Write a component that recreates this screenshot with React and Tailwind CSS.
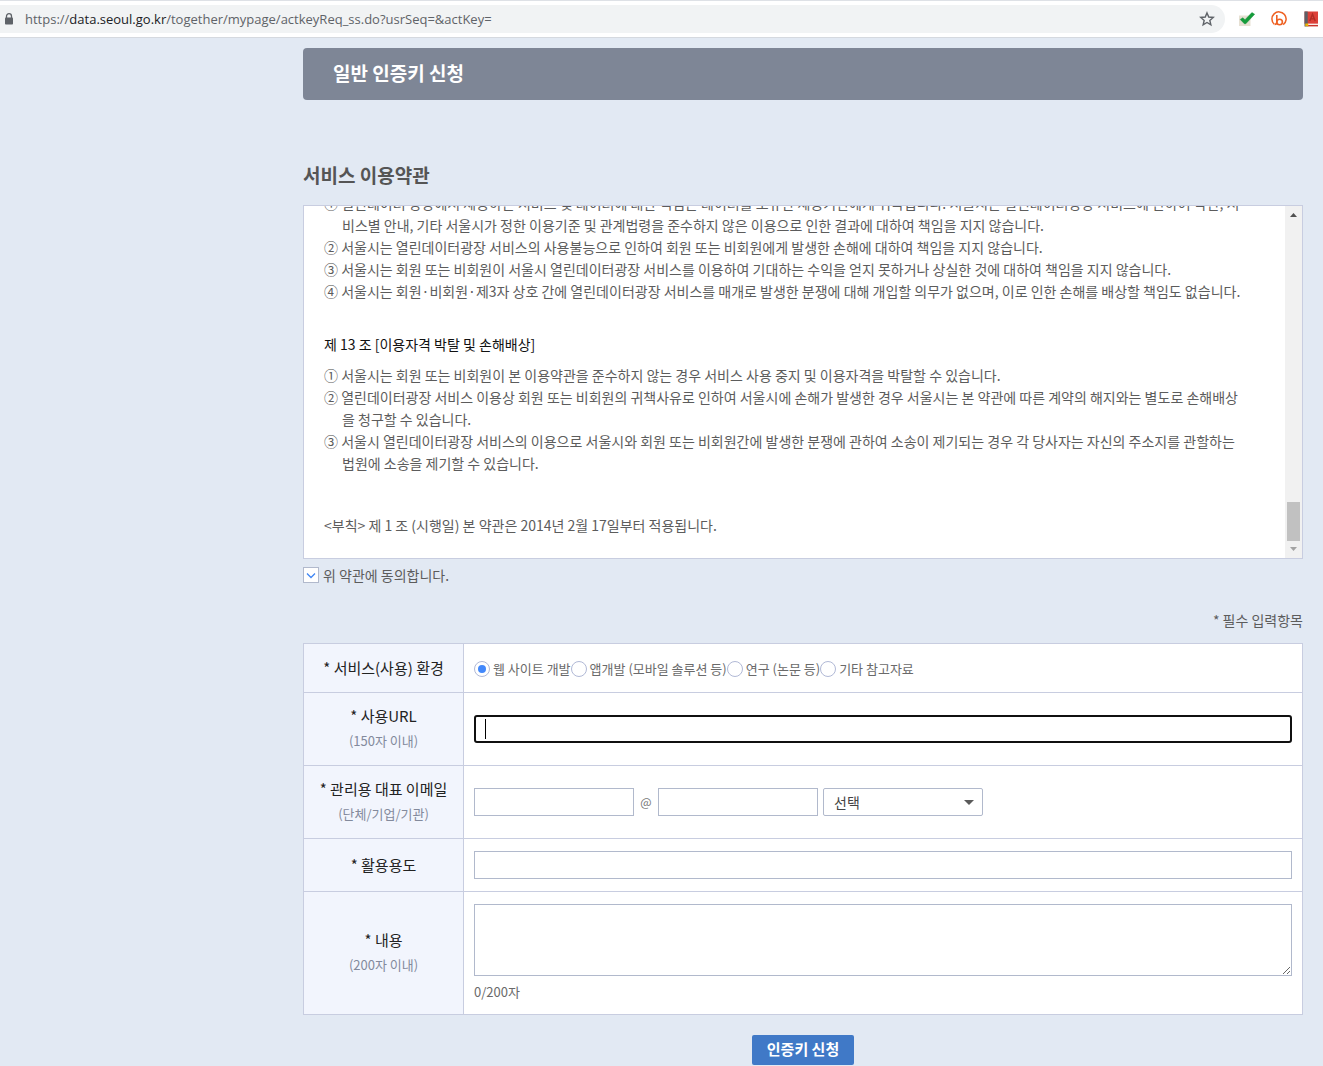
import React from "react";

const TERMS = [
  {
    title: null,
    items: [
      [
        "① 열린데이터 광장에서 제공하는 서비스 및 데이터에 대한 책임은 데이터를 보유한 제공기관에게 귀속됩니다. 서울시는 열린데이터광장 서비스에 관하여 약관, 서",
        "비스별 안내, 기타 서울시가 정한 이용기준 및 관계법령을 준수하지 않은 이용으로 인한 결과에 대하여 책임을 지지 않습니다.",
      ],
      ["② 서울시는 열린데이터광장 서비스의 사용불능으로 인하여 회원 또는 비회원에게 발생한 손해에 대하여 책임을 지지 않습니다."],
      ["③ 서울시는 회원 또는 비회원이 서울시 열린데이터광장 서비스를 이용하여 기대하는 수익을 얻지 못하거나 상실한 것에 대하여 책임을 지지 않습니다."],
      ["④ 서울시는 회원·비회원·제3자 상호 간에 열린데이터광장 서비스를 매개로 발생한 분쟁에 대해 개입할 의무가 없으며, 이로 인한 손해를 배상할 책임도 없습니다."],
    ],
  },
  {
    title: "제 13 조 [이용자격 박탈 및 손해배상]",
    items: [
      ["① 서울시는 회원 또는 비회원이 본 이용약관을 준수하지 않는 경우 서비스 사용 중지 및 이용자격을 박탈할 수 있습니다."],
      [
        "② 열린데이터광장 서비스 이용상 회원 또는 비회원의 귀책사유로 인하여 서울시에 손해가 발생한 경우 서울시는 본 약관에 따른 계약의 해지와는 별도로 손해배상",
        "을 청구할 수 있습니다.",
      ],
      [
        "③ 서울시 열린데이터광장 서비스의 이용으로 서울시와 회원 또는 비회원간에 발생한 분쟁에 관하여 소송이 제기되는 경우 각 당사자는 자신의 주소지를 관할하는",
        "법원에 소송을 제기할 수 있습니다.",
      ],
    ],
  },
];

const ENVIRONMENTS = ["웹 사이트 개발", "앱개발 (모바일 솔루션 등)", "연구 (논문 등)", "기타 참고자료"];

function BrowserBar() {
  return (
    <header className="flex h-[38px] items-center border-t border-b border-t-[#dee1e6] border-b-[#d5d9df] bg-white pr-1">
      <div className="flex h-7 flex-1 items-center rounded-r-full bg-[#f1f3f4] pr-2.5 pl-1">
        <svg className="mr-[11px] h-3 w-2.5" viewBox="0 0 10 12" aria-hidden="true">
          <path d="M2.5 5V3.2a2.5 2.5 0 0 1 5 0V5" fill="none" stroke="#5f6368" strokeWidth="1.3" />
          <rect x="1" y="4.6" width="8" height="6.9" rx="0.8" fill="#5f6368" />
        </svg>
        <span className="flex-1 font-['Open_Sans',sans-serif] text-[13px] leading-5 text-[#5f6368]">
          https://<span className="text-[#202124]">data.seoul.go.kr</span>/together/mypage/actkeyReq_ss.do?usrSeq=&amp;actKey=
        </span>
        <button type="button" aria-label="북마크" className="flex">
          <svg className="h-4 w-4" viewBox="0 0 16 16" aria-hidden="true">
            <path d="M8 1.9l1.75 4.15 4.5.38-3.42 2.95 1.03 4.4L8 11.45l-3.86 2.33 1.03-4.4-3.42-2.95 4.5-.38z" fill="none" stroke="#5f6368" strokeWidth="1.4" />
          </svg>
        </button>
      </div>
      <div className="flex items-center gap-4 pl-3.5">
        <svg className="h-4 w-4" viewBox="0 0 16 16" aria-hidden="true">
          <path d="M0 4.5h11.5V15H0z" fill="#e6e0d3" />
          <path d="M1.2 8.4l2.6-1.7 2.2 2L12.9 1.5l2.8 1.7-8.9 9.6H5.4z" fill="#149c3b" stroke="#0d8a31" strokeWidth="0.4" />
        </svg>
        <svg className="h-4 w-4" viewBox="0 0 16 16" aria-hidden="true">
          <path d="M3.2 13.2A7.1 7.1 0 1 1 12.2 13.7" fill="none" stroke="#ee6123" strokeWidth="1.5" />
          <path d="M3.6 13.4c1.6 0 2.2-.9 2.2-2.4V3.9" fill="none" stroke="#ee6123" strokeWidth="1.6" />
          <circle cx="8.6" cy="11" r="2.8" fill="none" stroke="#ee6123" strokeWidth="1.6" />
        </svg>
        <svg className="h-4 w-4" viewBox="0 0 16 16" aria-hidden="true">
          <rect x="1.5" y="0.5" width="13.5" height="12.3" fill="#dc4038" />
          <path d="M4.5 12.8H15v1.2H4.5z" fill="#f6ebe8" />
          <path d="M4.5 14H15v1.4H4.5z" fill="#c9352c" />
          <rect x="1.5" y="0.5" width="3.2" height="15" fill="#5b6067" />
          <path d="M6.8 10L9.5 3.2 12.2 10M7.7 7.9h3.6" fill="none" stroke="#b02c24" strokeWidth="1.4" />
          <path d="M2.3 12.4h3v3.4l-1.5-1-1.5 1z" fill="#f4b400" />
        </svg>
      </div>
    </header>
  );
}

function TermsPanel() {
  return (
    <div className="flex h-[354px] border border-[#c8cde0] bg-white">
      <div className="flex min-w-0 flex-1 flex-col justify-end overflow-hidden pr-5 pb-[22px] pl-5 text-[14px] leading-[22px] whitespace-nowrap text-[#5c5c5c]">
        {TERMS.map((section, i) => (
          <section key={i} className={i === 0 ? "mb-[31px]" : "mb-10"}>
            {section.title && <h3 className="mb-[9px] font-normal text-[#111]">{section.title}</h3>}
            {section.items.map((lines) => (
              <p key={lines[0]} className="pl-[18px] -indent-[18px]">
                {lines[0]}
                {lines[1] && <span className="block indent-0">{lines[1]}</span>}
              </p>
            ))}
          </section>
        ))}
        <p>&lt;부칙&gt; 제 1 조 (시행일) 본 약관은 2014년 2월 17일부터 적용됩니다.</p>
      </div>
      <div className="flex w-[17px] flex-col items-center justify-between bg-[#f1f1f1]" aria-hidden="true">
        <svg className="h-[17px] w-[17px]" viewBox="0 0 17 17">
          <path d="M5 11l3.5-4 3.5 4z" fill="#505050" />
        </svg>
        <div className="flex flex-col items-center">
          <div className="h-[39px] w-[13px] bg-[#c1c1c1]" />
          <svg className="h-[17px] w-[17px]" viewBox="0 0 17 17">
            <path d="M5 6l3.5 4L12 6z" fill="#a3a3a3" />
          </svg>
        </div>
      </div>
    </div>
  );
}

function Row({ id, label, note, height, last, children }) {
  return (
    <tr className={height}>
      <th scope="row" className="w-[160px] border border-[#c8cde0] bg-[#f2f5fd] p-0 pb-0.5 text-center align-middle font-normal">
        <label htmlFor={id} className="block text-[15px] leading-[25px] text-[#222]">
          {label}
        </label>
        {note && <span className="block text-[13px] leading-[25px] text-[#838a9c]">{note}</span>}
      </th>
      <td className={last ? "border border-[#c8cde0] bg-white px-2.5 pt-3 pb-2.5 align-top" : "border border-[#c8cde0] bg-white px-2.5 align-middle"}>
        {children}
      </td>
    </tr>
  );
}

const fieldClass = "block h-7 border border-[#b1b9cc] bg-white px-2.5 text-[13px] text-[#444] outline-none";

export default function App() {
  return (
    <div className="min-h-screen bg-[#e2e9f3] font-['Noto_Sans_CJK_KR',sans-serif] text-[#5c5c5c]">
      <BrowserBar />
      <main className="pt-2.5 pr-5 pl-[303px]">
        <h1 className="rounded bg-[#7e8696] px-[30px] pb-0.5 text-[19px] leading-[50px] font-bold text-white">일반 인증키 신청</h1>

        <h2 className="mt-[60px] mb-[15px] text-[19px] leading-[30px] font-bold text-[#555]">서비스 이용약관</h2>
        <TermsPanel />

        <label className="mt-1.5 flex h-5 items-center gap-1 text-[14px]">
          <span className="grid h-4 w-4">
            <input
              type="checkbox"
              defaultChecked
              className="peer col-start-1 row-start-1 h-4 w-4 appearance-none border border-[#b1b9cc] bg-white"
            />
            <svg className="pointer-events-none col-start-1 row-start-1 hidden h-4 w-4 peer-checked:block" viewBox="0 0 16 16" aria-hidden="true">
              <path d="M4 6.5l4 4 4-4" fill="none" stroke="#3f86f5" strokeWidth="1.3" />
            </svg>
          </span>
          위 약관에 동의합니다.
        </label>

        <p className="mt-[25px] mb-[13px] text-right text-[14px] leading-5">* 필수 입력항목</p>

        <form onSubmit={(e) => e.preventDefault()}>
          <table className="w-full table-fixed border-collapse">
            <tbody>
              <Row id="env-0" label="* 서비스(사용) 환경" height="h-[49px]">
                <div className="flex items-center pt-0.5 text-[13px] text-[#6a6a6a]">
                  {ENVIRONMENTS.map((name, i) => (
                    <label key={name} htmlFor={"env-" + i} className="flex items-center gap-[3px]">
                      <input
                        id={"env-" + i}
                        type="radio"
                        name="environment"
                        defaultChecked={i === 0}
                        className="h-4 w-4 appearance-none rounded-full border border-[#b1b9d6] bg-white bg-clip-content p-[3px] checked:bg-[#4288fb]"
                      />
                      {name}
                    </label>
                  ))}
                </div>
              </Row>
              <Row id="url" label="* 사용URL" note="(150자 이내)" height="h-[73px]">
                <div className="relative">
                  <input id="url" type="text" className="block h-7 w-full rounded-[3px] border-2 border-[#101010] bg-white px-2.5 text-[13px] caret-transparent outline-none" />
                  <span className="absolute top-1 left-[11px] h-5 w-px bg-black" aria-hidden="true" />
                </div>
              </Row>
              <Row id="email" label="* 관리용 대표 이메일" note="(단체/기업/기관)" height="h-[73px]">
                <div className="flex items-center">
                  <input id="email" type="text" className={fieldClass + " w-[160px]"} />
                  <span className="w-6 text-center text-[12px] text-[#777]">@</span>
                  <input type="text" aria-label="이메일 도메인" className={fieldClass + " w-[160px]"} />
                  <span className="ml-[5px] grid w-[160px] items-center">
                    <select aria-label="도메인 선택" className="col-start-1 row-start-1 h-7 w-full appearance-none rounded-[2px] border border-[#b1b9cc] bg-white px-2.5 text-[14px] leading-5 text-[#444] outline-none">
                      <option>선택</option>
                    </select>
                    <svg className="pointer-events-none col-start-1 row-start-1 mr-[9px] h-[5px] w-[10px] justify-self-end" viewBox="0 0 10 5" aria-hidden="true">
                      <path d="M0 0h10L5 5z" fill="#5a5a5a" />
                    </svg>
                  </span>
                </div>
              </Row>
              <Row id="purpose" label="* 활용용도" height="h-[53px]">
                <input id="purpose" type="text" className={fieldClass + " w-full"} />
              </Row>
              <Row id="content" label="* 내용" note="(200자 이내)" height="h-[123px]" last>
                <textarea id="content" className="block h-[72px] w-full border border-[#b1b9cc] bg-white p-2.5 text-[13px] outline-none" />
                <p className="mt-1.5 text-[13px] leading-5 text-[#6a6a6a]">0/200자</p>
              </Row>
            </tbody>
          </table>
          <div className="flex justify-center pt-5">
            <button type="submit" className="h-[30px] rounded-[2px] bg-[#4079c7] px-[15px] pb-0.5 text-[15px] leading-7 font-bold text-white">
              인증키 신청
            </button>
          </div>
        </form>
      </main>
    </div>
  );
}
